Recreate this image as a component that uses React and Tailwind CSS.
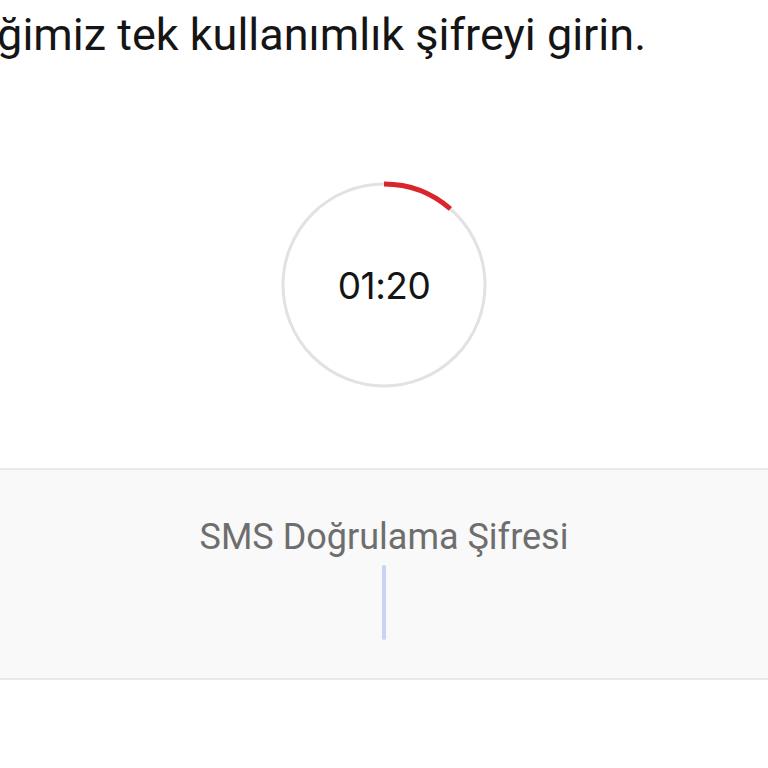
import React from "react";

const R = 101;
const CIRC = 2 * Math.PI * R;

function Timer({ label, progress }) {
  return (
    <div className="relative w-[210px] h-[210px]">
      <svg width="210" height="210" viewBox="0 0 210 210" className="block">
        <circle cx="105" cy="105" r={R} fill="none" stroke="#e2e2e2" strokeWidth="3" />
        <circle
          cx="105"
          cy="105"
          r={R}
          fill="none"
          stroke="#d9262c"
          strokeWidth="5"
          strokeDasharray={`${CIRC * progress} ${CIRC}`}
          transform="rotate(-90 105 105)"
        />
      </svg>
      <div className="absolute inset-0 flex items-center justify-center">
        <span
          className="text-[37px] leading-none text-[#141414] tracking-[-0.5px]"
          style={{ fontFamily: "Inter, 'Noto Sans', sans-serif" }}
        >
          {label}
        </span>
      </div>
    </div>
  );
}

export default function App() {
  return (
    <div
      className="w-[768px] h-[768px] bg-white overflow-hidden flex flex-col"
      style={{ fontFamily: "Roboto, 'Liberation Sans', sans-serif" }}
    >
      <div className="w-[646px] pt-[9px] flex justify-end overflow-hidden">
        <p className="whitespace-nowrap text-[45px] leading-[52px] text-[#151515]">
          Telefonunuza gönderdiğimiz tek kullanımlık şifreyi girin.
        </p>
      </div>

      <div className="mt-[119px] flex justify-center">
        <Timer label="01:20" progress={0.114} />
      </div>

      <div className="mt-[78px] h-[212px] border-y-2 border-[#e8e8e8] bg-[#f9f9f9] flex flex-col items-center pt-[45px]">
        <label className="text-[36px] leading-[44px] text-[#6e6e6e]">
          SMS Doğrulama Şifresi
        </label>
        <div className="mt-[6px] w-[4px] h-[75px] rounded-full bg-[#c8d4f4]" />
      </div>
    </div>
  );
}
